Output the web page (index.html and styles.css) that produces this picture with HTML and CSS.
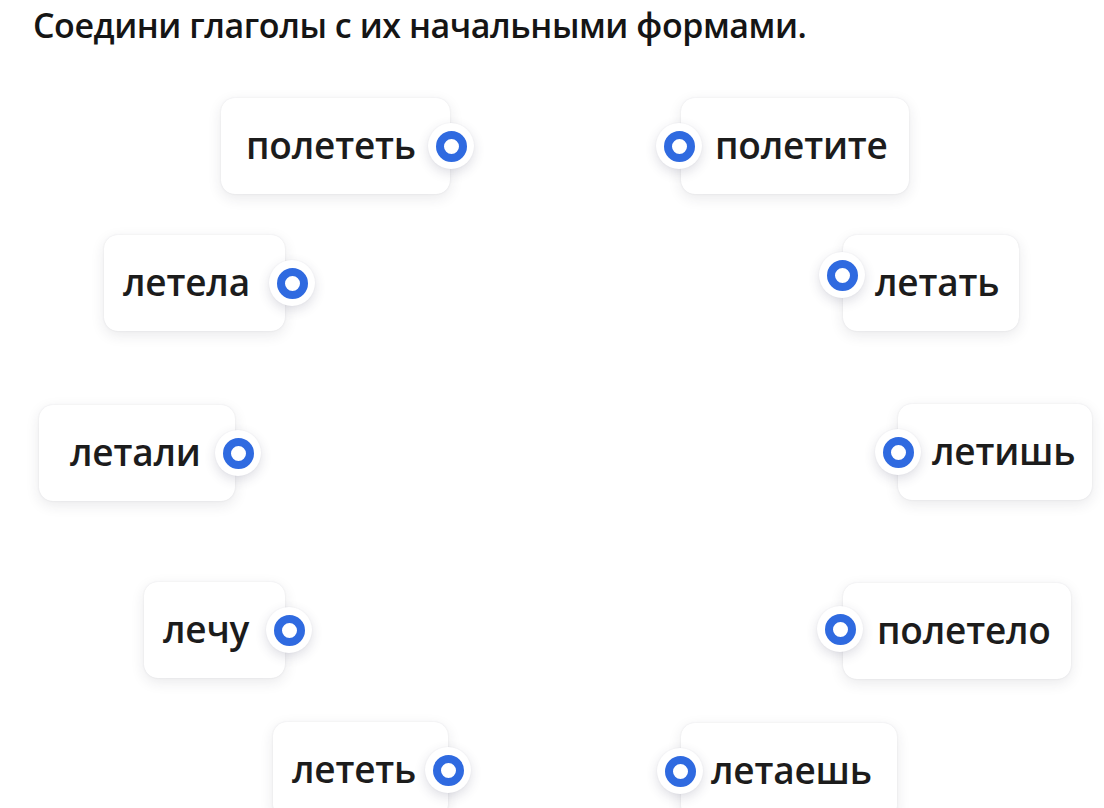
FILE: index.html
```html
<!DOCTYPE html>
<html lang="ru">
<head>
<meta charset="utf-8">
<title>Соедини глаголы</title>
<link rel="stylesheet" href="styles.css">
</head>
<body>
<main class="task">
  <h1 class="task-title">Соедини глаголы с их начальными формами.</h1>
  <div class="board">
    <div class="card card-left" style="left:221px;top:98px;width:229px;padding-left:25px;--dx:1px">
      <span class="word">полететь</span><span class="dot"></span>
    </div>
    <div class="card card-left" style="left:104px;top:235px;width:181px;padding-left:19px;--dx:7px">
      <span class="word">летела</span><span class="dot"></span>
    </div>
    <div class="card card-left" style="left:39px;top:405px;width:196px;padding-left:31px;--dx:3px">
      <span class="word">летали</span><span class="dot"></span>
    </div>
    <div class="card card-left" style="left:144px;top:582px;width:141px;padding-left:19px;--dx:4px">
      <span class="word">лечу</span><span class="dot"></span>
    </div>
    <div class="card card-left" style="left:273px;top:722px;width:175px;padding-left:19px;--dx:0px">
      <span class="word">лететь</span><span class="dot"></span>
    </div>

    <div class="card card-right" style="left:681px;top:98px;width:228px;padding-left:34px;--dx:-2px">
      <span class="dot"></span><span class="word">полетите</span>
    </div>
    <div class="card card-right" style="left:843px;top:235px;width:176px;padding-left:32px;--dx:-1px;--dy:-8px">
      <span class="dot"></span><span class="word">летать</span>
    </div>
    <div class="card card-right" style="left:898px;top:404px;width:194px;padding-left:34px;--dx:0px">
      <span class="dot"></span><span class="word">летишь</span>
    </div>
    <div class="card card-right" style="left:843px;top:583px;width:228px;padding-left:34px;--dx:-3px;--dy:-2px">
      <span class="dot"></span><span class="word">полетело</span>
    </div>
    <div class="card card-right" style="left:681px;top:723px;width:216px;padding-left:30px;--dx:-1px">
      <span class="dot"></span><span class="word">летаешь</span>
    </div>
  </div>
</main>
</body>
</html>
```
FILE: styles.css
```css
*, *::before, *::after { box-sizing: border-box; }

html, body {
  margin: 0;
  padding: 0;
  background: #ffffff;
}

body {
  font-family: "Open Sans", "Noto Sans", "Liberation Sans", sans-serif;
  color: #1c1c1c;
  width: 1104px;
  height: 808px;
  overflow: hidden;
}

.task {
  padding: 3px 0 0 33px;
}

.task-title {
  margin: 0;
  font-size: 34px;
  line-height: 44px;
  font-weight: 600;
  letter-spacing: -0.45px;
  color: #151515;
}

.board {
  position: relative;
  margin-left: -33px;
  margin-top: -47px;
  height: 760px;
}

.card {
  position: absolute;
  height: 96px;
  display: flex;
  align-items: center;
  background: #ffffff;
  border-radius: 14px;
  box-shadow: 0 4px 14px rgba(40, 40, 60, 0.10), 0 0 2px rgba(40, 40, 60, 0.10);
}

.word {
  font-size: 37px;
  font-weight: 600;
  letter-spacing: -0.2px;
  color: #1c1c1c;
  line-height: 1;
  padding-bottom: 4px;
}

.dot {
  position: absolute;
  top: 50%;
  width: 46px;
  height: 46px;
  border-radius: 50%;
  background: #ffffff;
  box-shadow: 0 4px 12px rgba(50, 50, 90, 0.16), 0 0 2px rgba(50, 50, 90, 0.06);
  transform: translate(-50%, calc(-50% + var(--dy, 0px)));
}

.dot::after {
  content: "";
  position: absolute;
  left: 7.5px;
  top: 7.5px;
  width: 31px;
  height: 31px;
  border-radius: 50%;
  border: 8.5px solid #2f6ae0;
  background: #ffffff;
}

.card-left .dot {
  left: calc(100% + var(--dx, 0px));
}

.card-right .dot {
  left: var(--dx, 0px);
}
```
